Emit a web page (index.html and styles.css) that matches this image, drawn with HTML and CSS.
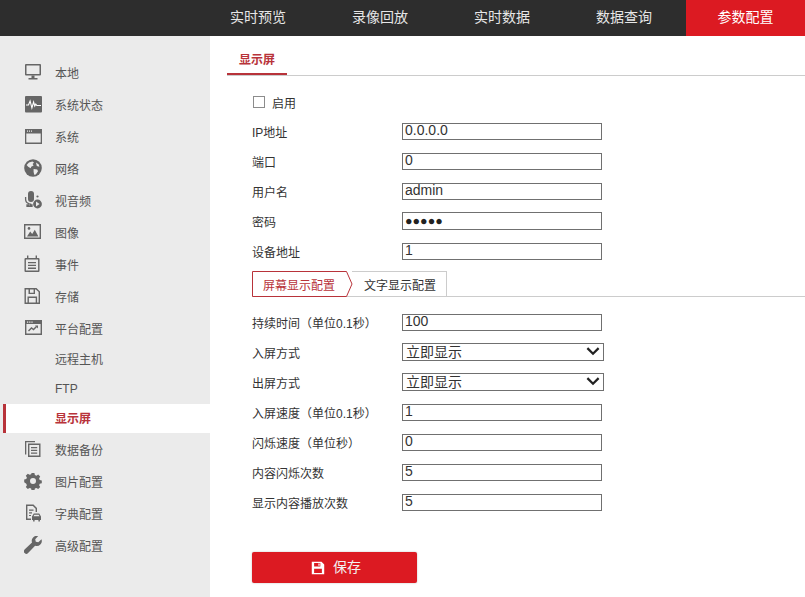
FILE: index.html
```html
<!DOCTYPE html>
<html lang="zh-CN">
<head>
  <meta charset="UTF-8" />
  <title>参数配置</title>
  <link rel="stylesheet" href="styles.css">
</head>
<body>
  <header class="topbar">
    <nav class="topnav">
      <a>实时预览</a>
      <a>录像回放</a>
      <a>实时数据</a>
      <a>数据查询</a>
      <a class="active">参数配置</a>
    </nav>
  </header>

  <div class="page">
    <!-- 左侧菜单 -->
    <aside class="sidebar">
      <div class="menu-item">
        <svg viewBox="0 0 18 18"><path d="M2 1h14a1 1 0 0 1 1 1v9.500a1 1 0 0 1-1 1H2a1 1 0 0 1-1-1V2a1 1 0 0 1 1-1zm.5 1.500v8.500h13V2.500z" fill-rule="evenodd"/><path d="M7.500 12.500h3V15h3v1.500h-9V15h3z"/></svg>
        <span>本地</span>
      </div>
      <div class="menu-item">
        <svg viewBox="0 0 18 18"><rect x="1" y="1" width="17" height="16.500" rx="1"/><path d="M2 10h2.500l1.600-4 1.800 7 1.700-6 1.200 4 1-2 1 1.500H17" fill="none" stroke="#fff" stroke-width="1.100"/></svg>
        <span>系统状态</span>
      </div>
      <div class="menu-item">
        <svg viewBox="0 0 18 18"><path d="M1 2h17v15H1zm1.300 4.600v9h14.400v-9zM3 3.600v1.200h1V3.600zm2 0v1.200h1V3.600zm2 0v1.200h1V3.600z" fill-rule="evenodd"/></svg>
        <span>系统</span>
      </div>
      <div class="menu-item">
        <svg viewBox="0 0 18 18"><circle cx="9" cy="9" r="8.800"/><path d="M5 3.400l3.400-.9 1.600 1-1.400 1.600 1 1.400-2.400 1.200-.6 1.600-2.400-1.600L2.600 6zM9.600 10l3.600.6.8 1.600-2.200 3.200-1.600.4-.6-3zM12 3.400l2.800 2.200.6 2.200-2.600-.8z" fill="#ebebeb"/></svg>
        <span>网络</span>
      </div>
      <div class="menu-item">
        <svg viewBox="0 0 18 18"><rect x="4" y="0" width="6" height="11" rx="3"/><path d="M1.600 6v2.200A4.600 4.600 0 0 0 5 12.600V14H3v1.400h5V14H6.600v-1.400" fill="none" stroke="#666" stroke-width="1.300"/><circle cx="13.500" cy="5.500" r="1.100"/><circle cx="13.500" cy="13" r="4.400"/><path d="M12 10.600l3.600 2.400-3.600 2.400z" fill="#ebebeb"/></svg>
        <span>视音频</span>
      </div>
      <div class="menu-item">
        <svg viewBox="0 0 18 18"><path d="M0 1h17v15H0zm1.400 1.400v12.200h14.200V2.400z" fill-rule="evenodd"/><path d="M3 13.500l3.200-5 2 2.600 2.600-4.400 3.600 6.800z"/><circle cx="5" cy="5.400" r="1.300"/></svg>
        <span>图像</span>
      </div>
      <div class="menu-item">
        <svg viewBox="0 0 18 18"><path d="M1.500 3h13a1 1 0 0 1 1 1v12a1 1 0 0 1-1 1h-13a1 1 0 0 1-1-1V4a1 1 0 0 1 1-1zm.4 1.400v11.200h12.200V4.400z" fill-rule="evenodd"/><path d="M3 .5h1.400V4H3zm8.600 0H13V4h-1.400zM4 7h8v1.300H4zm0 2.800h8v1.300H4zm0 2.800h8v1.300H4z"/></svg>
        <span>事件</span>
      </div>
      <div class="menu-item">
        <svg viewBox="0 0 18 18"><path d="M.5 1h12L16 4.500V17H.5zm1.400 1.400v13.200h12.700V5.100l-2.700-2.700H11V7H4.500V2.400zM6 2.400V5.700h3.600V2.400zM3.500 9.500h9.600v6.100h-1.400V11H4.900v4.600H3.500z" fill-rule="evenodd"/></svg>
        <span>存储</span>
      </div>
      <div class="menu-item">
        <svg viewBox="0 0 18 18"><path d="M1 1h17v15H1zm1.400 4v9.600h14.200V5zM3 2.500v1.300h1.200V2.500zm2.200 0v1.300h1.200V2.500zm2.200 0v1.300h1.200V2.500z" fill-rule="evenodd"/><path d="M4.500 12l3-3 2 1.500 3-3" fill="none" stroke="#666" stroke-width="1.400"/><path d="M11 6.500h3v3z"/></svg>
        <span>平台配置</span>
      </div>
      <div class="menu-sub">远程主机</div>
      <div class="menu-sub">FTP</div>
      <div class="menu-sub active">显示屏</div>
      <div class="menu-item after-sub">
        <svg viewBox="0 0 18 18"><path d="M1 1h1.300v13.500H1zM1 1h10v1.300H1z"/><path d="M4 3.500h12.500V17H4zm1.400 1.400v10.700h9.700V4.900z" fill-rule="evenodd"/><path d="M7 7h6.200v1.300H7zm0 2.700h6.200V11H7zm0 2.700h6.200v1.300H7z"/></svg>
        <span>数据备份</span>
      </div>
      <div class="menu-item">
        <svg viewBox="0 0 18 18"><path d="M7.600 1h2.800l.5 2.100 1.500.6 1.800-1.100 2 2-1.100 1.800.6 1.500 2.100.5v2.800l-2.100.5-.6 1.500 1.100 1.800-2 2-1.800-1.100-1.500.6-.5 2.100H7.600l-.5-2.100-1.500-.6-1.800 1.100-2-2 1.100-1.800-.6-1.500L.2 10.300V7.500l2.100-.5.6-1.500-1.100-1.800 2-2 1.800 1.100 1.500-.6zM9 6a3 3 0 1 0 0 6 3 3 0 0 0 0-6z" fill-rule="evenodd"/></svg>
        <span>图片配置</span>
      </div>
      <div class="menu-item">
        <svg viewBox="0 0 18 18"><path d="M2 .5h7.500L13 4v4h-1.400V4.800L8.900 1.900H3.400v12.700H7V16H2z"/><path d="M5 5.500h4.500v1.200H5zm0 2.700h3v1.200H5zm0 2.700h2v1.200H5z"/><path d="M9.800 9.500h5.400l1.800 3v3.500h-1.100v1.500h-1.500V16h-3.800v1.500H9.100V16H8v-3.500zm.5 1.300l-.8 1.500h6l-.8-1.500z" fill-rule="evenodd"/></svg>
        <span>字典配置</span>
      </div>
      <div class="menu-item">
        <svg viewBox="0 0 18 18"><path d="M17.500 3.300l-3.200 3-2.500-.6-.6-2.500 3-3.100a5 5 0 0 0-6.200 6.400L.6 13.600a2.400 2.400 0 0 0 3.500 3.400l7-7.300a5 5 0 0 0 6.400-6.400z"/></svg>
        <span>高级配置</span>
      </div>
    </aside>

    <!-- 内容 -->
    <main class="content">
      <div class="page-tabs"><span>显示屏</span></div>

      <form class="form">
        <label class="check-row"><span class="checkbox"></span>启用</label>
        <div class="row"><label>IP地址</label><div class="field">0.0.0.0</div></div>
        <div class="row"><label>端口</label><div class="field">0</div></div>
        <div class="row"><label>用户名</label><div class="field">admin</div></div>
        <div class="row"><label>密码</label><div class="field dots">●●●●●</div></div>
        <div class="row"><label>设备地址</label><div class="field">1</div></div>
      </form>

      <div class="steps">
        <div class="step current">
          <svg viewBox="0 0 101 26"><path d="M.5.500H94.500L100 13 94.500 25.500H.5z"/></svg>
          <span>屏幕显示配置</span>
        </div>
        <div class="step">文字显示配置</div>
      </div>

      <form class="form second">
        <div class="row"><label>持续时间（单位0.1秒）</label><div class="field">100</div></div>
        <div class="row"><label>入屏方式</label><div class="field select">立即显示<svg viewBox="0 0 12 8"><path d="M1 1l5 5 5-5" /></svg></div></div>
        <div class="row"><label>出屏方式</label><div class="field select">立即显示<svg viewBox="0 0 12 8"><path d="M1 1l5 5 5-5" /></svg></div></div>
        <div class="row"><label>入屏速度（单位0.1秒）</label><div class="field">1</div></div>
        <div class="row"><label>闪烁速度（单位秒）</label><div class="field">0</div></div>
        <div class="row"><label>内容闪烁次数</label><div class="field">5</div></div>
        <div class="row"><label>显示内容播放次数</label><div class="field">5</div></div>
      </form>

      <button class="save" type="button">
        <svg viewBox="0 0 18 18"><path d="M1 1h12.500L17 4.500V17H1zm3 1.600V7h8V2.600zm5.500.7h1.600v2.900H9.500zM4 10v5.400h10V10z" fill-rule="evenodd"/></svg>
        <span>保存</span>
      </button>
    </main>
  </div>
</body>
</html>
```

FILE: styles.css
```css
* { box-sizing:border-box; }
html, body { height:100%; }
body { margin:0; overflow:hidden; background:#fff; color:#333; font-family:"Liberation Sans","Noto Sans CJK SC",sans-serif; font-size:12px; }

/* 顶部导航 */
.topbar { height:36px; background:#2d2d2d; }
.topnav { display:flex; padding-left:197px; }
.topnav a { width:122px; height:36px; line-height:34px; text-align:center; color:#e6e6e6; font-size:14px; }
.topnav a.active { margin-left:1px; width:119px; background:#dc1a22; color:#fff; }

.page { display:flex; height:561px; }

/* 左侧菜单 */
.sidebar { width:210px; flex:none; padding-top:20px; background:#ebebeb; }
.menu-item { display:flex; align-items:center; height:32px; padding-left:24px; color:#555; }
.menu-item svg { width:18px; height:18px; margin-right:13px; fill:#666; flex:none; }
.menu-sub { height:29px; line-height:28px; padding-left:55px; color:#555; }
.menu-item + .menu-sub { margin-top:2px; }
.menu-sub.active { margin-left:3px; padding-left:49px; border-left:3px solid #b8333a; background:#fff; color:#b8333a; font-weight:bold; line-height:30px; }
.menu-item.after-sub { margin-top:0; }

/* 内容 */
.content { flex:1; padding-left:17px; }
.page-tabs { height:40px; padding-top:15px; border-bottom:1px solid #ccc; }
.page-tabs span { display:block; width:60px; height:24px; text-align:center; line-height:18px; color:#b8333a; font-weight:bold; border-bottom:2px solid #b8333a; }

.form { padding-left:25px; }
.check-row { display:flex; align-items:center; height:26px; margin-top:13px; margin-bottom:1px; }
.checkbox { width:12px; height:12px; margin:0 7px 0 1px; border:1px solid #8c8c8c; background:#fff; }

.row { display:flex; align-items:center; height:30px; }
.row label { width:150px; flex:none; color:#333; }
.field { display:flex; align-items:center; justify-content:space-between; width:200px; height:17px; padding:0 2px 2px; border:1px solid #707070; font-size:14px; color:#333; }
.field.dots { height:18px; padding-bottom:1px; font-size:12.5px; color:#222; }
.field.select { width:202px; height:18px; padding:0 3px 3px; }
.field.select svg { width:14px; height:9px; margin-top:2px; fill:none; stroke:#222; stroke-width:2; }

/* 步骤标签 */
.steps { display:flex; height:26px; margin:5px 0 0 25px; border-bottom:1px solid #ccc; }
.step { display:flex; align-items:center; height:25px; }
.step.current { position:relative; width:101px; height:26px; padding-left:11px; color:#b8333a; }
.step.current svg { position:absolute; left:0; top:0; width:101px; height:26px; fill:#fff; stroke:#b8333a; }
.step.current span { position:relative; }
.step:not(.current) { width:95px; padding-left:12px; margin-left:-1px; border:1px solid #ccc; border-left:none; border-bottom:none; }

.form.second { padding-top:10px; }

/* 保存 */
.save { display:flex; align-items:center; justify-content:center; gap:8px; width:165px; height:31px; margin:35px 0 0 25px; padding:0 0 0 3px; border:none; border-radius:2px; background:#dc1a22; color:#f2f2f2; font:inherit; font-size:14px; box-shadow:0 0 2px #bbb; }
.save svg { width:14px; height:14px; fill:#fff; }
.save span { margin-bottom:3px; }
```
